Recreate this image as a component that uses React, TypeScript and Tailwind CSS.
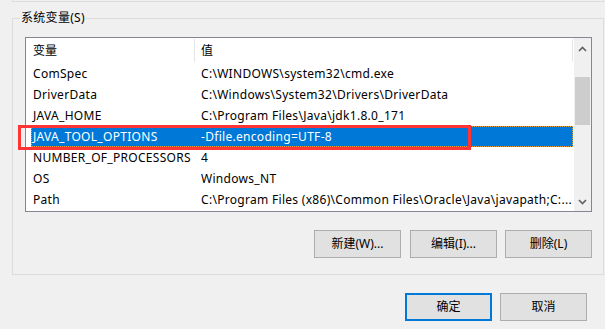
import React from "react";

const rows: [string, string][] = [
  ["ComSpec", "C:\\WINDOWS\\system32\\cmd.exe"],
  ["DriverData", "C:\\Windows\\System32\\Drivers\\DriverData"],
  ["JAVA_HOME", "C:\\Program Files\\Java\\jdk1.8.0_171"],
  ["JAVA_TOOL_OPTIONS", "-Dfile.encoding=UTF-8"],
  ["NUMBER_OF_PROCESSORS", "4"],
  ["OS", "Windows_NT"],
  ["Path", "C:\\Program Files (x86)\\Common Files\\Oracle\\Java\\javapath;C:..."],
];

const font = {
  fontFamily: '"Noto Sans", "Noto Sans CJK SC", sans-serif',
};

function Btn({ label, primary }: { label: string; primary?: boolean }) {
  return (
    <div
      className={
        "w-[87px] h-[28px] flex items-center justify-center bg-[#e1e1e1] text-[12px] text-black " +
        (primary ? "border-2 border-[#0078d7]" : "border border-[#adadad]")
      }
    >
      {label}
    </div>
  );
}

export default function App() {
  return (
    <div
      className="w-[605px] h-[329px] bg-[#f0f0f0] overflow-hidden text-black"
      style={font}
    >
      {/* bottom of previous group box */}
      <div className="ml-[12px] w-[592px] h-[2px] border-x border-b border-[#dcdcdc]" />

      {/* group box */}
      <div className="mt-[16px] ml-[12px] w-[592px] h-[257px] border border-[#dcdcdc] flex flex-col">
        <span className="self-start ml-[7px] -mt-[9px] px-[1px] bg-[#f0f0f0] leading-[16px] text-[12px] tracking-[0.3px]">
          系统变量(S)
        </span>

        {/* list box */}
        <div className="mt-[11px] ml-[12px] w-[567px] h-[175px] border border-[#828790] bg-white flex">
          <div className="w-[547px] flex flex-col">
            {/* header */}
            <div className="h-[25px] flex items-center text-[12px] ml-[5px]">
              <div className="w-[163px] pl-[2px] shrink-0">变量</div>
              <div className="w-px h-[23px] bg-[#e5e5e5] shrink-0" />
              <div className="flex-1 pl-[6px]">值</div>
              <div className="w-px h-[23px] bg-[#e5e5e5] shrink-0" />
            </div>
            {rows.map(([k, v]) => {
              const sel = k === "JAVA_TOOL_OPTIONS";
              return (
                <div
                  key={k}
                  className={
                    "relative h-[21px] ml-[5px] flex items-center text-[12px] whitespace-nowrap tracking-[0.3px] " +
                    (sel
                      ? "bg-[#0078d7] text-white border border-dotted border-[#e8a040]"
                      : "border border-transparent")
                  }
                >
                  <div className="w-[169px] pl-[1px] shrink-0">{k}</div>
                  <div className="flex-1 overflow-hidden">{v}</div>
                  {sel && (
                    <div className="absolute left-[-14px] top-[-2px] w-[453px] h-[25px] border-[3px] border-[#ff3535]" />
                  )}
                </div>
              );
            })}
          </div>
          {/* scrollbar */}
          <div className="w-[17px] ml-[1px] bg-[#f0f0f0] flex flex-col items-center">
            <div className="h-[17px] w-full flex items-center justify-center mt-[2px]">
              <svg width="9" height="6" viewBox="0 0 9 6">
                <path d="M1 5 L4.5 1.5 L8 5" stroke="#606060" strokeWidth="1.6" fill="none" />
              </svg>
            </div>
            <div className="mt-[20px] w-[15px] h-[48px] bg-[#cdcdcd]" />
            <div className="flex-1" />
            <div className="h-[17px] w-full flex items-center justify-center mb-[1px]">
              <svg width="9" height="6" viewBox="0 0 9 6">
                <path d="M1 1 L4.5 4.5 L8 1" stroke="#606060" strokeWidth="1.6" fill="none" />
              </svg>
            </div>
          </div>
        </div>

        {/* buttons */}
        <div className="mt-[18px] mr-[11px] flex justify-end gap-[8px]">
          <Btn label="新建(W)..." />
          <div className="ml-[1px]">
            <Btn label="编辑(I)..." />
          </div>
          <Btn label="删除(L)" />
        </div>
      </div>

      {/* dialog buttons */}
      <div className="mt-[18px] ml-[405px] flex gap-[8px]">
        <Btn label="确定" primary />
        <Btn label="取消" />
      </div>
    </div>
  );
}
